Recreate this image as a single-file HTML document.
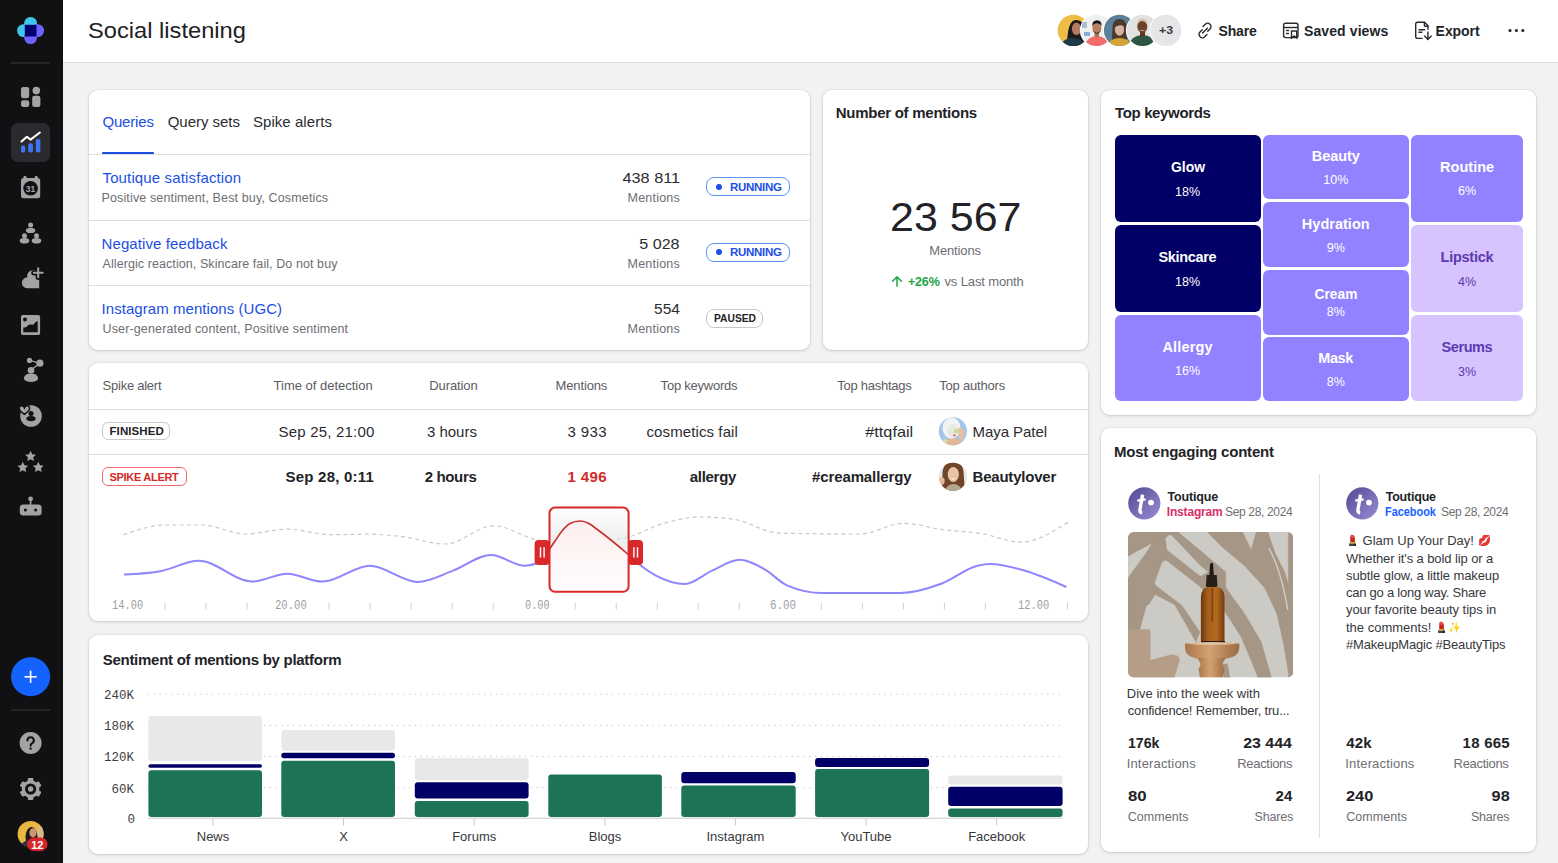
<!DOCTYPE html>
<html><head><meta charset="utf-8"><title>Social listening</title>
<style>
html,body{margin:0;padding:0;width:1558px;height:863px;overflow:hidden;background:#f2f2f4;font-family:'Liberation Sans', sans-serif}
.t{position:absolute;white-space:nowrap;line-height:1;}
.card{position:absolute;background:#fff;border-radius:9px;box-shadow:0 0 0 1px rgba(0,0,0,0.03),0 1px 3.5px rgba(0,0,0,0.15)}
.badge{position:absolute;box-sizing:border-box;border:1px solid;border-radius:8px;background:#fff}
</style></head><body>

<div style="position:absolute;left:0;top:0;width:63px;height:863px;background:#111113"></div>
<svg style="position:absolute;left:0;top:0" width="63" height="863" viewBox="0 0 63 863">
 <!-- logo -->
 <g>
  <rect x="24.2" y="16.9" width="12.8" height="14" rx="6.4" fill="#3ec6ec"/>
  <rect x="17.1" y="24.2" width="14" height="12.8" rx="6.4" fill="#3ec6ec"/>
  <rect x="30.1" y="24.2" width="14" height="12.8" rx="6.4" fill="#6c63ff"/>
  <rect x="24.2" y="30.1" width="12.8" height="14" rx="6.4" fill="#6c63ff"/>
  <rect x="24.8" y="24.8" width="11.7" height="11.7" fill="#00006e"/>
 </g>
 <line x1="11" y1="63" x2="50" y2="63" stroke="#3a3a3e" stroke-width="1"/>
 <!-- dashboard -->
 <g fill="#a3a3a6">
  <rect x="21" y="87" width="8.2" height="11.3" rx="2.2"/>
  <rect x="21" y="100.2" width="8.2" height="6.8" rx="2.2"/>
  <circle cx="36.3" cy="90.6" r="3.8"/>
  <rect x="32.2" y="95.8" width="8.2" height="11.2" rx="2.2"/>
 </g>
 <!-- active -->
 <rect x="11" y="123" width="39" height="39" rx="7" fill="#2b2b2f"/>
 <g fill="#3f74f5">
  <rect x="21" y="145.5" width="4.2" height="7" rx="1.6"/>
  <rect x="28.2" y="143.2" width="4.8" height="9.3" rx="2"/>
  <rect x="35.8" y="139" width="4.6" height="13.5" rx="2"/>
 </g>
 <polyline points="21.5,141.6 26.9,136.7 30.6,139.6 39.9,132.5" fill="none" stroke="#fff" stroke-width="2" stroke-linecap="round" stroke-linejoin="round"/>
 <!-- calendar -->
 <g>
  <rect x="21" y="178" width="19.2" height="20.3" rx="2.5" fill="#a3a3a6"/>
  <rect x="23.5" y="176" width="3" height="4" rx="1" fill="#a3a3a6"/>
  <rect x="34.7" y="176" width="3" height="4" rx="1" fill="#a3a3a6"/>
  <circle cx="30.6" cy="188.3" r="7.3" fill="#111113"/>
  <text x="30.6" y="191.6" font-family="Liberation Sans" font-weight="700" font-size="8.5" fill="#a3a3a6" text-anchor="middle">31</text>
 </g>
 <!-- people -->
 <g fill="#a3a3a6">
  <circle cx="30.6" cy="225" r="2.5"/>
  <ellipse cx="30.6" cy="230.4" rx="4.7" ry="2.7"/>
  <circle cx="24.5" cy="235.7" r="2.5"/>
  <ellipse cx="24.5" cy="240.8" rx="4.8" ry="2.8"/>
  <circle cx="36.5" cy="235.7" r="2.5"/>
  <ellipse cx="36.5" cy="240.8" rx="4.8" ry="2.8"/>
 </g>
 <!-- cloud plus -->
 <g>
  <path d="M27 288.2 A5.3 5.3 0 0 1 27.3 277.6 A5.6 5.6 0 0 1 38.3 274.5 L39.2 278 V288.2 Z" fill="#a3a3a6"/>
  <path d="M38.2 268.3 V277.3 M33.8 272.8 H42.7" stroke="#111113" stroke-width="5.2" stroke-linecap="round"/>
  <path d="M38.2 268.3 V277.3 M33.8 272.8 H42.7" stroke="#a3a3a6" stroke-width="2" stroke-linecap="round"/>
 </g>
 <!-- image -->
 <g>
  <rect x="21" y="315" width="19.1" height="20" rx="1.8" fill="#a3a3a6"/>
  <circle cx="25" cy="319.4" r="2" fill="#111113"/>
  <path d="M23.3 332.2 V327.4 Q25.5 328 27.5 326 Q28.5 324.2 30 324.4 L33.5 324.8 Q35 321.5 37.7 321 V332.2 Z" fill="#111113"/>
 </g>
 <!-- network person -->
 <g fill="#a3a3a6">
  <line x1="29.5" y1="360.4" x2="39.9" y2="363.2" stroke="#a3a3a6" stroke-width="1.3"/>
  <line x1="39.9" y1="363.2" x2="31" y2="370" stroke="#a3a3a6" stroke-width="1.3"/>
  <circle cx="29.5" cy="360.4" r="2.6"/>
  <circle cx="39.9" cy="363.2" r="3.6"/>
  <circle cx="31" cy="370.2" r="3.3"/>
  <path d="M23.8 379 q0 -5.6 7.2 -5.6 q7.2 0 7.2 5.6 q-2 2.9 -7.2 2.9 q-5.2 0 -7.2 -2.9z"/>
 </g>
 <!-- heart circle -->
 <g>
  <circle cx="31" cy="416" r="10.8" fill="#a3a3a6"/>
  <circle cx="31" cy="413.6" r="2.5" fill="#111113"/>
  <ellipse cx="31" cy="418.6" rx="4.6" ry="2.7" fill="#111113"/>
  <path d="M24.4 407.8 C23.4 405.0 19.2 405.0 19.2 408.40000000000003 C19.2 410.8 22.4 412.6 24.4 414.40000000000003 C26.4 412.6 29.599999999999998 410.8 29.599999999999998 408.40000000000003 C29.599999999999998 405.0 25.4 405.0 24.4 407.8 Z" fill="#a3a3a6" stroke="#111113" stroke-width="1.4"/>
 </g>
 <!-- stars -->
 <g fill="#a3a3a6">
  <path d="M30.6 450.8 l1.65 3.4 3.7 .5 -2.7 2.6 .65 3.7 -3.3 -1.75 -3.3 1.75 .65 -3.7 -2.7 -2.6 3.7 -.5z"/>
  <path d="M22.8 461.8 l1.65 3.4 3.7 .5 -2.7 2.6 .65 3.7 -3.3 -1.75 -3.3 1.75 .65 -3.7 -2.7 -2.6 3.7 -.5z"/>
  <path d="M38.3 461.8 l1.65 3.4 3.7 .5 -2.7 2.6 .65 3.7 -3.3 -1.75 -3.3 1.75 .65 -3.7 -2.7 -2.6 3.7 -.5z"/>
 </g>
 <!-- robot -->
 <g fill="#a3a3a6">
  <circle cx="30.6" cy="498.8" r="2.4"/>
  <rect x="29.8" y="499" width="1.6" height="6" />
  <rect x="19.8" y="504.6" width="21.8" height="11" rx="3.5"/>
  <circle cx="25.4" cy="510" r="1.5" fill="#111113"/>
  <circle cx="35.6" cy="510" r="1.5" fill="#111113"/>
 </g>
 <!-- plus button -->
 <circle cx="30.6" cy="676.8" r="19.5" fill="#1463ff"/>
 <rect x="24.5" y="676" width="12.2" height="1.6" fill="#fff"/>
 <rect x="29.8" y="670.7" width="1.6" height="12.2" fill="#fff"/>
 <line x1="11" y1="710" x2="50" y2="710" stroke="#3a3a3e" stroke-width="1"/>
 <!-- help -->
 <circle cx="30.6" cy="743" r="11" fill="#a3a3a6"/>
 <path d="M27.4 740.5 a3.2 3.2 0 1 1 4.6 2.9 q-1.4 .8 -1.4 2.3" fill="none" stroke="#111113" stroke-width="2" stroke-linecap="round"/>
 <circle cx="30.6" cy="748.6" r="1.2" fill="#111113"/>
 <!-- gear -->
 <g transform="translate(30.6 789)">
  <g fill="#a3a3a6">
   <rect x="-2.8" y="-11" width="5.6" height="22" rx="1"/>
   <rect x="-2.8" y="-11" width="5.6" height="22" rx="1" transform="rotate(60)"/>
   <rect x="-2.8" y="-11" width="5.6" height="22" rx="1" transform="rotate(120)"/>
   <circle r="8.8"/>
  </g>
  <circle r="5.6" fill="#111113"/>
  <circle r="2.7" fill="#a3a3a6"/>
 </g>
 <!-- avatar -->
 <defs><clipPath id="sav"><circle cx="30.6" cy="834" r="13"/></clipPath></defs>
 <g clip-path="url(#sav)">
  <rect x="17" y="820" width="28" height="28" fill="#e9b842"/>
  <ellipse cx="41.5" cy="833" rx="4.2" ry="6.5" fill="#d8b88e"/>
  <ellipse cx="31.5" cy="837" rx="6" ry="10" fill="#22191a"/>
  <ellipse cx="33" cy="832.8" rx="3.6" ry="4.6" fill="#c99576"/>
  <path d="M19 848 q4 -8 11 -8 q5 0 8 3 v5 z" fill="#24333f"/>
 </g>
 <rect x="27" y="837.5" width="20.5" height="13.5" rx="6.75" fill="#d8232a"/>
 <text x="37.3" y="848.6" font-family="Liberation Sans" font-weight="700" font-size="11" fill="#fff" text-anchor="middle">12</text>
</svg>

<div style="position:absolute;left:63px;top:0;width:1495px;height:62px;background:#fff;border-bottom:1px solid #dcdcdf"></div>
<svg style="position:absolute;left:1050px;top:8px" width="140" height="46" viewBox="1050 8 140 46">
<defs>
<clipPath id="ha1"><circle cx="1073.3" cy="30.4" r="15.6"/></clipPath>
<clipPath id="ha2"><circle cx="1096.5" cy="30.4" r="15.6"/></clipPath>
<clipPath id="ha3"><circle cx="1119.5" cy="30.4" r="15.6"/></clipPath>
<clipPath id="ha4"><circle cx="1142.5" cy="30.4" r="15.6"/></clipPath>
</defs>
<g clip-path="url(#ha1)">
 <rect x="1056" y="13" width="36" height="36" fill="#efbd47"/>
 <path d="M1066 50 L1068 32 Q1070 19 1077 20 Q1085 21 1084 32 L1086 50 Z" fill="#1f1a1c"/>
 <path d="M1058 50 Q1062 38 1072 38 Q1084 38 1090 50 Z" fill="#1f3a48"/>
 <ellipse cx="1076.5" cy="28.8" rx="4.6" ry="6.2" fill="#b57a62"/>
 <path d="M1072 24 Q1077 20 1081 25 L1080 22 Q1076 19 1072 22Z" fill="#1f1a1c"/>
</g>
<circle cx="1096.5" cy="30.4" r="16.6" fill="#fff"/>
<g clip-path="url(#ha2)">
 <rect x="1080" y="13" width="36" height="36" fill="#eef1ef"/>
 <rect x="1082" y="22" width="5" height="6" fill="#8fa6c8" opacity="0.7"/>
 <rect x="1084" y="32" width="6" height="4" fill="#4b7bd0" opacity="0.6"/>
 <path d="M1083 50 Q1086 36 1097 36 Q1108 36 1111 50 Z" fill="#f06d6b"/>
 <rect x="1094.5" y="31" width="4.5" height="6" fill="#a87458"/>
 <ellipse cx="1096.8" cy="27.8" rx="4.5" ry="5.8" fill="#b98062"/>
 <path d="M1092.3 26 Q1092 20.5 1097 20.3 Q1102 20.5 1101.5 26 Q1100 23 1097 23.3 Q1094 23 1092.3 26Z" fill="#1a1514"/>
 <path d="M1093 30 Q1097 36 1100.7 30 Q1100 33.5 1097 34 Q1094 33.5 1093 30Z" fill="#3a2a24"/>
</g>
<circle cx="1119.5" cy="30.4" r="16.6" fill="#fff"/>
<g clip-path="url(#ha3)">
 <rect x="1103" y="13" width="36" height="36" fill="#5b8098"/>
 <path d="M1112 40 L1112.5 27 Q1113 19 1119.5 19 Q1126 19 1126.5 27 L1127 40 Z" fill="#4a3a30"/>
 <path d="M1105 50 Q1108 38 1119.5 38 Q1131 38 1134 50 Z" fill="#d6a437"/>
 <ellipse cx="1119.5" cy="29.5" rx="4.6" ry="6.2" fill="#d9b39e"/>
 <path d="M1114.5 27 Q1115 21 1120 21.5 Q1125 22 1124.8 27 Q1122 23.5 1114.5 27Z" fill="#4a3a30"/>
</g>
<circle cx="1142.5" cy="30.4" r="16.6" fill="#fff"/>
<g clip-path="url(#ha4)">
 <rect x="1126" y="13" width="36" height="36" fill="#e2e1df"/>
 <path d="M1127 50 Q1130 35 1142.5 35 Q1155 35 1158 50 Z" fill="#2e5541"/>
 <rect x="1140" y="30" width="5" height="6" fill="#5e3422"/>
 <ellipse cx="1142.3" cy="26.5" rx="5" ry="6.2" fill="#6e3f2a"/>
 <path d="M1137.3 24.5 Q1137.5 18.5 1142.3 18.5 Q1147 18.5 1147.3 24.5 Q1145 21 1142.3 21 Q1139.5 21 1137.3 24.5Z" fill="#d7c09c"/>
 <path d="M1139.5 29.5 Q1142.3 32 1145 29.5 Q1142.3 30.8 1139.5 29.5Z" fill="#fff"/>
</g>
<circle cx="1165.8" cy="30.4" r="16.6" fill="#fff"/>
<circle cx="1165.8" cy="30.4" r="15.6" fill="#e6e6e8"/>
</svg>
<svg style="position:absolute;left:0;top:0" width="1558" height="62">
 <g fill="none" stroke="#2a2a2e" stroke-width="1.4" stroke-linecap="round">
  <path d="M1203 26.6 l2.3 -2.3 a3.3 3.3 0 0 1 4.7 4.7 l-2.3 2.3"/>
  <path d="M1207 34.4 l-2.3 2.3 a3.3 3.3 0 0 1 -4.7 -4.7 l2.3 -2.3"/>
  <line x1="1202.6" y1="33" x2="1207.4" y2="28.2"/>
 </g>
 <g fill="none" stroke="#2a2a2e" stroke-width="1.4">
  <rect x="1283.6" y="23.3" width="14.4" height="14.3" rx="2"/>
  <line x1="1283.6" y1="27.5" x2="1298" y2="27.5"/>
  <line x1="1286" y1="30.5" x2="1289" y2="30.5"/>
  <line x1="1286" y1="33.5" x2="1289" y2="33.5"/>
  <path d="M1291.5 31 h5.2 v7 l-2.6 -2 l-2.6 2 z" fill="#fff"/>
 </g>
 <g fill="none" stroke="#2a2a2e" stroke-width="1.4" stroke-linejoin="round" stroke-linecap="round">
  <path d="M1422 38.4 H1417.7 a2 2 0 0 1 -2 -2 V24.3 a2 2 0 0 1 2 -2 H1424.6 L1428 25.7 V29.3"/>
  <path d="M1424.4 22.5 V25.4 a0.9 0.9 0 0 0 0.9 0.9 H1428"/>
  <path d="M1419 29.8 H1424.6 M1419 32.3 H1421.8"/>
  <path d="M1427.9 32 V39.3 M1424.6 36.1 L1427.9 39.4 L1431.2 36.1"/>
 </g>
 <g fill="#2a2a2e"><circle cx="1510" cy="30.5" r="1.6"/><circle cx="1516.4" cy="30.5" r="1.6"/><circle cx="1522.8" cy="30.5" r="1.6"/></g>
</svg>
<div style="position:absolute;left:63px;top:63px;width:1495px;height:800px;background:#f2f2f4"></div>
<div class="card" style="left:89px;top:89.5px;width:721px;height:260.5px"></div>
<div class="card" style="left:823px;top:89.5px;width:265px;height:260.5px"></div>
<div class="card" style="left:1101px;top:89.5px;width:435px;height:325.7px"></div>
<div class="card" style="left:89px;top:362.5px;width:999px;height:258.5px"></div>
<div class="card" style="left:89px;top:635px;width:999px;height:219px"></div>
<div class="card" style="left:1101px;top:428px;width:435px;height:424px"></div>
<div style="position:absolute;left:102px;top:152px;width:52px;height:3px;background:#1b4fe4;border-radius:1px"></div>
<div style="position:absolute;left:89px;top:154px;width:721px;height:1px;background:#dedee2"></div>
<div style="position:absolute;left:89px;top:219.5px;width:721px;height:1px;background:#dedee2"></div>
<div style="position:absolute;left:89px;top:284.8px;width:721px;height:1px;background:#dedee2"></div>
<div class="badge" style="left:706px;top:177.4px;width:84px;height:19px;border-color:#5a93f4"></div>
<div style="position:absolute;left:716px;top:183.9px;width:6.4px;height:6.4px;border-radius:50%;background:#1b4fe4"></div>
<div class="badge" style="left:706px;top:242.60000000000002px;width:84px;height:19px;border-color:#5a93f4"></div>
<div style="position:absolute;left:716px;top:249.10000000000002px;width:6.4px;height:6.4px;border-radius:50%;background:#1b4fe4"></div>
<div class="badge" style="left:706px;top:308.5px;width:57px;height:19px;border-color:#c9c9cd"></div>
<svg style="position:absolute;left:890px;top:272px" width="14" height="16"><path d="M7 14.3 V5 M2.6 9.3 L7 4.9 L11.4 9.3" fill="none" stroke="#22a447" stroke-width="1.5" stroke-linecap="round" stroke-linejoin="round"/></svg>
<div style="position:absolute;left:1114.5px;top:134.8px;width:146.0px;height:87.4px;background:#000066;border-radius:6px"></div>
<div style="position:absolute;left:1114.5px;top:224.9px;width:146.0px;height:87.1px;background:#000066;border-radius:6px"></div>
<div style="position:absolute;left:1114.5px;top:314.8px;width:146.0px;height:86.7px;background:#9282ff;border-radius:6px"></div>
<div style="position:absolute;left:1262.6px;top:134.8px;width:146.3px;height:64.7px;background:#9282ff;border-radius:6px"></div>
<div style="position:absolute;left:1262.6px;top:202.4px;width:146.3px;height:64.6px;background:#9282ff;border-radius:6px"></div>
<div style="position:absolute;left:1262.6px;top:269.6px;width:146.3px;height:65.0px;background:#9282ff;border-radius:6px"></div>
<div style="position:absolute;left:1262.6px;top:337.2px;width:146.3px;height:64.3px;background:#9282ff;border-radius:6px"></div>
<div style="position:absolute;left:1411.4px;top:134.8px;width:111.4px;height:87.4px;background:#9282ff;border-radius:6px"></div>
<div style="position:absolute;left:1411.4px;top:224.9px;width:111.4px;height:87.1px;background:#d7c3fd;border-radius:6px"></div>
<div style="position:absolute;left:1411.4px;top:314.8px;width:111.4px;height:86.7px;background:#d7c3fd;border-radius:6px"></div>
<div style="position:absolute;left:89px;top:408.5px;width:999px;height:1px;background:#dedee2"></div>
<div style="position:absolute;left:89px;top:454px;width:999px;height:1px;background:#dedee2"></div>
<div class="badge" style="left:102.4px;top:422.3px;width:68px;height:18px;border-color:#c9c9cd;border-radius:6px"></div>
<div class="badge" style="left:102.4px;top:467.2px;width:84.5px;height:19px;border-color:#ef6b6b;border-radius:6px"></div>
<svg style="position:absolute;left:930px;top:410px" width="45" height="90" viewBox="930 410 45 90">
<defs><clipPath id="av1"><circle cx="952.9" cy="431.3" r="14.1"/></clipPath><clipPath id="av2"><circle cx="952.9" cy="476.8" r="14.1"/></clipPath></defs>
<g clip-path="url(#av1)">
 <rect x="936" y="415" width="34" height="34" fill="#a3c6ea"/>
 <path d="M939 447 Q944 438 953 438 Q962 438 966 447 Z" fill="#e2b79a"/>
 <ellipse cx="951.5" cy="428" rx="9" ry="10.5" fill="#f3f3f5"/>
 <ellipse cx="953" cy="431" rx="5.5" ry="7" fill="#e9e7e2"/>
 <circle cx="956" cy="431" r="2.2" fill="#bfe08e"/>
 <ellipse cx="954.4" cy="435.3" rx="1.4" ry="0.9" fill="#e0504a"/>
 <path d="M958 428 Q963 427 964.5 433 L962 441 Q958 438 958.5 433Z" fill="#e9bd9f"/>
 <circle cx="945" cy="441" r="2" fill="#cfe5b0"/>
</g>
<g clip-path="url(#av2)">
 <rect x="936" y="460" width="34" height="34" fill="#e6e5e3"/>
 <path d="M942 492 L942.5 472 Q944 461 953.5 461.5 Q963 462 963.5 472 L965 492 Z" fill="#6f4429"/>
 <path d="M944 494 Q946 484 953.5 484 Q961 484 963 494 Z" fill="#b5a693"/>
 <ellipse cx="953.3" cy="474.5" rx="5.6" ry="7.4" fill="#eac2a6"/>
 <path d="M950.5 478 Q953.3 481 956.2 478 Q953.3 479.2 950.5 478Z" fill="#fff"/>
 <ellipse cx="941.5" cy="481" rx="3.2" ry="3.8" fill="#e7b999"/>
</g>
</svg>
<svg style="position:absolute;left:0;top:0" width="1558" height="863" viewBox="0 0 1558 863">
<defs><clipPath id="boxclip"><rect x="549.5" y="507.6" width="79.1" height="84.1" rx="5"/></clipPath><linearGradient id="boxg" x1="0" y1="0" x2="0" y2="1"><stop offset="0" stop-color="#000" stop-opacity="0.005"/><stop offset="0.45" stop-color="#000" stop-opacity="0.07"/><stop offset="1" stop-color="#000" stop-opacity="0.0"/></linearGradient><linearGradient id="pinkg" x1="0" y1="0" x2="0" y2="1"><stop offset="0" stop-color="#fdeeee"/><stop offset="1" stop-color="#fff"/></linearGradient><clipPath id="outclip"><rect x="0" y="0" width="549" height="863"/><rect x="629" y="0" width="600" height="863"/></clipPath></defs>
<path d="M123.3 534.7 C137.5 529.9 151.8 525.0 166.0 525.0 C177.8 525.0 189.7 525.0 201.5 525.0 C216.3 525.0 231.0 534.0 245.8 534.0 C259.5 534.0 273.3 529.2 287.0 529.2 C301.8 529.2 316.6 534.7 331.4 534.7 C344.2 534.7 357.1 534.2 369.9 534.2 C381.2 534.2 392.5 535.5 403.8 536.9 C417.6 538.6 431.3 544.0 445.1 544.0 C461.4 544.0 477.6 525.8 493.9 525.8 C508.2 525.8 522.4 537.0 536.7 539.9 C544.5 541.5 552.2 543.0 560.0 543.0 C573.3 543.0 586.7 542.3 600.0 541.0 C609.9 540.0 619.7 539.2 629.6 536.6 C640.7 533.7 651.8 526.8 662.9 523.6 C675.7 519.9 688.4 517.0 701.2 517.0 C712.0 517.0 722.9 517.7 733.7 519.2 C749.0 521.3 764.2 532.9 779.5 533.2 C806.6 533.7 833.6 534.0 860.7 534.0 C875.0 534.0 889.2 523.3 903.5 523.3 C916.3 523.3 929.1 527.8 941.9 529.5 C955.5 531.3 969.2 531.6 982.8 533.9 C995.4 536.0 1007.9 542.2 1020.5 542.2 C1036.3 542.2 1052.1 532.2 1067.9 522.3" fill="none" stroke="#c9c9cc" stroke-width="1.2" stroke-dasharray="4 3.2"/>
<path d="M124.0 574.5 C136.6 573.9 149.1 573.2 161.7 570.9 C174.0 568.6 186.3 560.8 198.6 560.8 C216.6 560.8 234.5 581.5 252.5 581.5 C264.0 581.5 275.6 573.8 287.1 573.8 C298.9 573.8 310.8 581.6 322.6 581.6 C338.4 581.6 354.1 565.7 369.9 565.7 C385.9 565.7 401.8 581.9 417.8 581.9 C429.4 581.9 440.9 575.1 452.5 570.9 C465.3 566.2 478.1 554.9 490.9 554.9 C502.2 554.9 513.6 565.7 524.9 565.7 C528.6 565.7 532.3 565.0 536.0 563.5 C540.4 561.8 544.8 555.4 549.2 549.5 C551.5 546.5 553.7 542.8 556.0 539.5 C558.0 536.6 560.0 533.4 562.0 531.0 C564.7 527.8 567.3 524.8 570.0 523.5 C573.3 521.8 576.7 521.0 580.0 521.0 C583.0 521.0 586.0 521.9 589.0 523.5 C591.3 524.7 593.7 526.8 596.0 528.5 C606.7 536.3 617.5 545.2 628.2 554.5 C631.9 557.7 635.5 561.3 639.2 564.2 C644.6 568.6 650.1 572.4 655.5 575.3 C665.3 580.6 675.2 583.9 685.0 583.9 C693.9 583.9 702.7 574.8 711.6 570.9 C720.9 566.8 730.3 559.8 739.6 559.8 C748.0 559.8 756.4 564.7 764.8 569.4 C772.2 573.5 779.5 582.1 786.9 585.3 C798.7 590.4 810.5 593.0 822.3 593.0 C848.4 593.0 874.5 593.0 900.6 593.0 C914.4 593.0 928.1 588.6 941.9 583.5 C954.0 579.0 966.2 568.1 978.3 565.5 C982.3 564.6 986.4 564.0 990.4 564.0 C1001.9 564.0 1013.5 567.5 1025.0 570.8 C1038.8 574.7 1052.6 580.9 1066.4 587.0" fill="none" stroke="#8f86ff" stroke-width="2" clip-path="url(#outclip)"/>
<g clip-path="url(#boxclip)">
<rect x="548" y="506" width="82" height="88" fill="#fff" opacity="0.6"/>
<rect x="548" y="506" width="82" height="88" fill="url(#boxg)"/>
<path d="M124.0 574.5 C136.6 573.9 149.1 573.2 161.7 570.9 C174.0 568.6 186.3 560.8 198.6 560.8 C216.6 560.8 234.5 581.5 252.5 581.5 C264.0 581.5 275.6 573.8 287.1 573.8 C298.9 573.8 310.8 581.6 322.6 581.6 C338.4 581.6 354.1 565.7 369.9 565.7 C385.9 565.7 401.8 581.9 417.8 581.9 C429.4 581.9 440.9 575.1 452.5 570.9 C465.3 566.2 478.1 554.9 490.9 554.9 C502.2 554.9 513.6 565.7 524.9 565.7 C528.6 565.7 532.3 565.0 536.0 563.5 C540.4 561.8 544.8 555.4 549.2 549.5 C551.5 546.5 553.7 542.8 556.0 539.5 C558.0 536.6 560.0 533.4 562.0 531.0 C564.7 527.8 567.3 524.8 570.0 523.5 C573.3 521.8 576.7 521.0 580.0 521.0 C583.0 521.0 586.0 521.9 589.0 523.5 C591.3 524.7 593.7 526.8 596.0 528.5 C606.7 536.3 617.5 545.2 628.2 554.5 C631.9 557.7 635.5 561.3 639.2 564.2 C644.6 568.6 650.1 572.4 655.5 575.3 C665.3 580.6 675.2 583.9 685.0 583.9 C693.9 583.9 702.7 574.8 711.6 570.9 C720.9 566.8 730.3 559.8 739.6 559.8 C748.0 559.8 756.4 564.7 764.8 569.4 C772.2 573.5 779.5 582.1 786.9 585.3 C798.7 590.4 810.5 593.0 822.3 593.0 C848.4 593.0 874.5 593.0 900.6 593.0 C914.4 593.0 928.1 588.6 941.9 583.5 C954.0 579.0 966.2 568.1 978.3 565.5 C982.3 564.6 986.4 564.0 990.4 564.0 C1001.9 564.0 1013.5 567.5 1025.0 570.8 C1038.8 574.7 1052.6 580.9 1066.4 587.0 L1066 600 L124 600 Z" fill="url(#pinkg)"/>
<path d="M124.0 574.5 C136.6 573.9 149.1 573.2 161.7 570.9 C174.0 568.6 186.3 560.8 198.6 560.8 C216.6 560.8 234.5 581.5 252.5 581.5 C264.0 581.5 275.6 573.8 287.1 573.8 C298.9 573.8 310.8 581.6 322.6 581.6 C338.4 581.6 354.1 565.7 369.9 565.7 C385.9 565.7 401.8 581.9 417.8 581.9 C429.4 581.9 440.9 575.1 452.5 570.9 C465.3 566.2 478.1 554.9 490.9 554.9 C502.2 554.9 513.6 565.7 524.9 565.7 C528.6 565.7 532.3 565.0 536.0 563.5 C540.4 561.8 544.8 555.4 549.2 549.5 C551.5 546.5 553.7 542.8 556.0 539.5 C558.0 536.6 560.0 533.4 562.0 531.0 C564.7 527.8 567.3 524.8 570.0 523.5 C573.3 521.8 576.7 521.0 580.0 521.0 C583.0 521.0 586.0 521.9 589.0 523.5 C591.3 524.7 593.7 526.8 596.0 528.5 C606.7 536.3 617.5 545.2 628.2 554.5 C631.9 557.7 635.5 561.3 639.2 564.2 C644.6 568.6 650.1 572.4 655.5 575.3 C665.3 580.6 675.2 583.9 685.0 583.9 C693.9 583.9 702.7 574.8 711.6 570.9 C720.9 566.8 730.3 559.8 739.6 559.8 C748.0 559.8 756.4 564.7 764.8 569.4 C772.2 573.5 779.5 582.1 786.9 585.3 C798.7 590.4 810.5 593.0 822.3 593.0 C848.4 593.0 874.5 593.0 900.6 593.0 C914.4 593.0 928.1 588.6 941.9 583.5 C954.0 579.0 966.2 568.1 978.3 565.5 C982.3 564.6 986.4 564.0 990.4 564.0 C1001.9 564.0 1013.5 567.5 1025.0 570.8 C1038.8 574.7 1052.6 580.9 1066.4 587.0" fill="none" stroke="#c9302c" stroke-width="1.6"/>
</g>
<rect x="549.5" y="507.6" width="79.1" height="84.1" rx="5.5" fill="none" stroke="#d8282a" stroke-width="2"/>
<rect x="534.6" y="540" width="15" height="25" rx="4" fill="#d8282a"/>
<rect x="539.8000000000001" y="547.2" width="1.4" height="10.4" fill="#fff"/>
<rect x="543.4000000000001" y="547.2" width="1.4" height="10.4" fill="#fff"/>
<rect x="628.0" y="540" width="15" height="25" rx="4" fill="#d8282a"/>
<rect x="633.2" y="547.2" width="1.4" height="10.4" fill="#fff"/>
<rect x="636.8000000000001" y="547.2" width="1.4" height="10.4" fill="#fff"/>
<rect x="164.5" y="602.8" width="1" height="6.8" fill="#cfcfd3"/>
<rect x="205.5" y="602.8" width="1" height="6.8" fill="#cfcfd3"/>
<rect x="246.6" y="602.8" width="1" height="6.8" fill="#cfcfd3"/>
<rect x="328.6" y="602.8" width="1" height="6.8" fill="#cfcfd3"/>
<rect x="369.6" y="602.8" width="1" height="6.8" fill="#cfcfd3"/>
<rect x="410.6" y="602.8" width="1" height="6.8" fill="#cfcfd3"/>
<rect x="451.7" y="602.8" width="1" height="6.8" fill="#cfcfd3"/>
<rect x="492.7" y="602.8" width="1" height="6.8" fill="#cfcfd3"/>
<rect x="574.7" y="602.8" width="1" height="6.8" fill="#cfcfd3"/>
<rect x="615.7" y="602.8" width="1" height="6.8" fill="#cfcfd3"/>
<rect x="656.8" y="602.8" width="1" height="6.8" fill="#cfcfd3"/>
<rect x="697.8" y="602.8" width="1" height="6.8" fill="#cfcfd3"/>
<rect x="738.8" y="602.8" width="1" height="6.8" fill="#cfcfd3"/>
<rect x="820.8" y="602.8" width="1" height="6.8" fill="#cfcfd3"/>
<rect x="861.9" y="602.8" width="1" height="6.8" fill="#cfcfd3"/>
<rect x="902.9" y="602.8" width="1" height="6.8" fill="#cfcfd3"/>
<rect x="943.9" y="602.8" width="1" height="6.8" fill="#cfcfd3"/>
<rect x="984.9" y="602.8" width="1" height="6.8" fill="#cfcfd3"/>
<rect x="1067.0" y="602.8" width="1" height="6.8" fill="#cfcfd3"/>
</svg>
<svg style="position:absolute;left:0;top:0" width="1558" height="863" viewBox="0 0 1558 863">
<line x1="148" y1="694.1" x2="1062.6" y2="694.1" stroke="#c4c4c8" stroke-width="1" stroke-dasharray="1.2 4.6"/>
<line x1="148" y1="725.3" x2="1062.6" y2="725.3" stroke="#c4c4c8" stroke-width="1" stroke-dasharray="1.2 4.6"/>
<line x1="148" y1="756.5" x2="1062.6" y2="756.5" stroke="#c4c4c8" stroke-width="1" stroke-dasharray="1.2 4.6"/>
<line x1="148" y1="787.7" x2="1062.6" y2="787.7" stroke="#c4c4c8" stroke-width="1" stroke-dasharray="1.2 4.6"/>
<rect x="148.4" y="716.1" width="113.6" height="45.1" rx="3.0" fill="#e8e8ea"/>
<rect x="148.4" y="764.2" width="113.6" height="3.6" rx="1.8" fill="#000066"/>
<rect x="148.4" y="770.2" width="113.6" height="46.8" rx="3.0" fill="#1c7454"/>
<rect x="281.3" y="730.1" width="113.7" height="20.7" rx="3.0" fill="#e8e8ea"/>
<rect x="281.3" y="752.8" width="113.7" height="5.4" rx="2.7" fill="#000066"/>
<rect x="281.3" y="760.8" width="113.7" height="56.2" rx="3.0" fill="#1c7454"/>
<rect x="414.8" y="758.2" width="113.8" height="22.0" rx="3.0" fill="#e8e8ea"/>
<rect x="414.8" y="782.2" width="113.8" height="16.4" rx="3.0" fill="#000066"/>
<rect x="414.8" y="800.9" width="113.8" height="16.1" rx="3.0" fill="#1c7454"/>
<rect x="548.3" y="774.5" width="113.6" height="42.5" rx="3.0" fill="#1c7454"/>
<rect x="681.3" y="772.1" width="114.4" height="11.1" rx="3.0" fill="#000066"/>
<rect x="681.3" y="785.6" width="114.4" height="31.4" rx="3.0" fill="#1c7454"/>
<rect x="815.1" y="757.9" width="114.0" height="9.0" rx="3.0" fill="#000066"/>
<rect x="815.1" y="769" width="114.0" height="48.0" rx="3.0" fill="#1c7454"/>
<rect x="948.2" y="775.6" width="114.4" height="9.0" rx="3.0" fill="#e8e8ea"/>
<rect x="948.2" y="786.7" width="114.4" height="19.3" rx="3.0" fill="#000066"/>
<rect x="948.2" y="808.5" width="114.4" height="8.5" rx="3.0" fill="#1c7454"/>
<rect x="147.5" y="817.7" width="915.1" height="1" fill="#c8c8cc"/>
<rect x="212.5" y="818.7" width="1" height="6.8" fill="#c8c8cc"/>
<rect x="343.0" y="818.7" width="1" height="6.8" fill="#c8c8cc"/>
<rect x="473.7" y="818.7" width="1" height="6.8" fill="#c8c8cc"/>
<rect x="604.5" y="818.7" width="1" height="6.8" fill="#c8c8cc"/>
<rect x="734.9" y="818.7" width="1" height="6.8" fill="#c8c8cc"/>
<rect x="865.5" y="818.7" width="1" height="6.8" fill="#c8c8cc"/>
<rect x="996.2" y="818.7" width="1" height="6.8" fill="#c8c8cc"/>
</svg>
<div style="position:absolute;left:1319px;top:474px;width:1px;height:364px;background:#dedee2"></div>
<svg style="position:absolute;left:1127.5px;top:486.5px" width="33" height="33" viewBox="0 0 33 33">
<defs><linearGradient id="lg1127" x1="0" y1="0" x2="1" y2="1"><stop offset="0" stop-color="#4f4890"/><stop offset="1" stop-color="#9b8fd6"/></linearGradient></defs>
<circle cx="16.3" cy="16.3" r="16.1" fill="url(#lg1127)"/>
<path d="M14.6 7.6 L12 22.5 q-0.5 3 2.2 3.4" fill="none" stroke="#fff" stroke-width="3.4" stroke-linecap="butt"/>
<path d="M9.3 13.6 L17.6 12.4" fill="none" stroke="#fff" stroke-width="2.2"/>
<circle cx="23" cy="15.6" r="2.9" fill="#fff"/>
</svg>
<svg style="position:absolute;left:1346px;top:486.8px" width="33" height="33" viewBox="0 0 33 33">
<defs><linearGradient id="lg1346" x1="0" y1="0" x2="1" y2="1"><stop offset="0" stop-color="#4f4890"/><stop offset="1" stop-color="#9b8fd6"/></linearGradient></defs>
<circle cx="16.3" cy="16.3" r="16.1" fill="url(#lg1346)"/>
<path d="M14.6 7.6 L12 22.5 q-0.5 3 2.2 3.4" fill="none" stroke="#fff" stroke-width="3.4" stroke-linecap="butt"/>
<path d="M9.3 13.6 L17.6 12.4" fill="none" stroke="#fff" stroke-width="2.2"/>
<circle cx="23" cy="15.6" r="2.9" fill="#fff"/>
</svg>
<svg style="position:absolute;left:1127.6px;top:532.1px" width="165.3" height="145.5" viewBox="0 0 165.3 145.5">
<defs><clipPath id="phc"><rect width="165.3" height="145.5" rx="6"/></clipPath><linearGradient id="amb" x1="0" y1="0" x2="1" y2="0"><stop offset="0" stop-color="#6a360e"/><stop offset="0.3" stop-color="#a85f1c"/><stop offset="0.65" stop-color="#b46a1e"/><stop offset="1" stop-color="#743c10"/></linearGradient><linearGradient id="ped" x1="0" y1="0" x2="1" y2="0"><stop offset="0" stop-color="#a8754a"/><stop offset="0.45" stop-color="#d3a273"/><stop offset="1" stop-color="#9a6a42"/></linearGradient></defs>
<g clip-path="url(#phc)">
<rect width="165.3" height="145.5" fill="#cbcac4"/>
<polygon points="0.0,0.0 50.2,0.0 72.4,18.6 97.8,40.0 97.8,81.2 72.4,55.0 38.0,28.0 34.0,30.0 26.5,50.7 28.2,54.0 53.5,72.9 72.0,100.0 68.0,110.0 46.8,72.9 27.3,62.5 20.5,72.9 18.6,72.9 12.2,96.3 0.0,141.0" fill="#a59685" stroke="#a59685" stroke-width="0.3" stroke-linejoin="round"/>
<polygon points="0.0,24.4 23.5,11.7 18.9,19.4 0.0,45.6" fill="#cbcac4" stroke="#cbcac4" stroke-width="0.3" stroke-linejoin="round"/>
<polygon points="37.5,6.7 40.5,3.6 43.4,3.3 72.4,33.8 80.0,40.0 72.4,44.0 39.2,18.1" fill="#cbcac4" stroke="#cbcac4" stroke-width="0.3" stroke-linejoin="round"/>
<polygon points="79.2,0.0 114.7,0.0 123.1,17.8 128.2,0.0 140.0,0.0 146.8,20.3 156.9,40.6 161.2,55.8 160.3,140.3 155.2,109.9 148.5,81.2 136.6,55.8 116.4,33.8 94.4,15.2" fill="#a59685" stroke="#a59685" stroke-width="0.3" stroke-linejoin="round"/>
<polygon points="160.3,0.0 165.3,0.0 165.3,145.5 160.3,145.5" fill="#a59685" stroke="#a59685" stroke-width="0.3" stroke-linejoin="round"/>
<path d="M140.9 16.1 Q153 38 159.8 77.8" stroke="#cbcac4" stroke-width="1.5" fill="none"/>
<polygon points="97.8,55.8 116.4,81.2 133.3,109.9 143.4,145.5 129.9,145.5 123.1,128.5 113.0,104.8 97.8,81.2" fill="#a59685" stroke="#a59685" stroke-width="0.3" stroke-linejoin="round"/>
<polygon points="94.4,131.9 99.4,131.9 102.0,145.5 96.0,145.5" fill="#a59685" stroke="#a59685" stroke-width="0.3" stroke-linejoin="round"/>
<polygon points="0.0,97.4 21.0,97.4 22.3,99.0 22.3,128.3 44.0,122.5 50.0,124.0 51.6,128.3 46.3,145.5 0.0,145.5" fill="#b59d87" stroke="#b59d87" stroke-width="0.3" stroke-linejoin="round"/>
<path d="M82.2 31.5 q1.4 -1.2 2.8 0 l0.8 11.5 h-4.4z" fill="#1c1816"/>
<path d="M78.6 43 h10.2 l0.6 10.5 q0 1.5 -1.5 1.5 h-8.4 q-1.5 0 -1.5 -1.5z" fill="#262019"/>
<path d="M72.9 65 q0 -8.5 7 -10 h9.6 q7 1.5 7 10 V110 q0 1.5 -1.5 1.5 H74.4 q-1.5 0 -1.5 -1.5 Z" fill="url(#amb)"/>
<rect x="83.5" y="56" width="1.6" height="34" fill="#5a2e0c" opacity="0.6"/>
<rect x="73.5" y="109" width="23.5" height="2.5" fill="#2a160a"/>
<path d="M57 111.5 q27 -3 54.3 0 v4 q0 9 -12 11 h-30.3 q-12 -2 -12 -11z" fill="url(#ped)"/>
<path d="M69.5 126 h28.3 l-2.8 4.5 q-1.5 3 1.5 6 l-1.5 9 h-23 l-1.5 -9 q3 -3 1.5 -6z" fill="url(#ped)"/>
<path d="M57 111.5 q27 -3 54.3 0 q-27 3 -54.3 0z" fill="#dcc0a2"/>
</g></svg>
<div class="t" id="t0" data-tw="155.5" style="top:19.98px;font-size:22px;font-weight:400;color:#1f2024;font-family:'Liberation Sans', sans-serif;left:88.42px;transform:scaleX(1.0761);transform-origin:0 0;">Social listening</div>
<div class="t" id="t1" data-tw="13.7" style="top:25.27px;font-size:11.5px;font-weight:700;color:#3a3a3e;font-family:'Liberation Sans', sans-serif;left:1165.80px;transform:translateX(-50%) scaleX(1.0770);">+3</div>
<div class="t" id="t2" data-tw="38.5" style="top:24.25px;font-size:14px;font-weight:700;color:#232327;font-family:'Liberation Sans', sans-serif;letter-spacing:-0.156px;left:1218.50px;">Share</div>
<div class="t" id="t3" data-tw="84.5" style="top:24.25px;font-size:14px;font-weight:700;color:#232327;font-family:'Liberation Sans', sans-serif;letter-spacing:0.101px;left:1304.00px;">Saved views</div>
<div class="t" id="t4" data-tw="44.4" style="top:24.25px;font-size:14px;font-weight:700;color:#232327;font-family:'Liberation Sans', sans-serif;letter-spacing:-0.055px;left:1435.60px;">Export</div>
<div class="t" id="t5" data-tw="51.1" style="top:114.10px;font-size:15px;font-weight:400;color:#1b4fe4;font-family:'Liberation Sans', sans-serif;letter-spacing:-0.154px;left:102.40px;">Queries</div>
<div class="t" id="t6" data-tw="71.7" style="top:114.10px;font-size:15px;font-weight:400;color:#2c2c30;font-family:'Liberation Sans', sans-serif;letter-spacing:-0.036px;left:167.70px;">Query sets</div>
<div class="t" id="t7" data-tw="78.4" style="top:114.10px;font-size:15px;font-weight:400;color:#2c2c30;font-family:'Liberation Sans', sans-serif;letter-spacing:0.048px;left:253.00px;">Spike alerts</div>
<div class="t" id="t8" data-tw="138.3" style="top:170.30px;font-size:15px;font-weight:400;color:#1b4fe4;font-family:'Liberation Sans', sans-serif;letter-spacing:0.136px;left:102.50px;">Toutique satisfaction</div>
<div class="t" id="t9" data-tw="225.3" style="top:192.42px;font-size:12.5px;font-weight:400;color:#6e6e73;font-family:'Liberation Sans', sans-serif;letter-spacing:0.136px;left:101.50px;">Positive sentiment, Best buy, Cosmetics</div>
<div class="t" id="t10" data-tw="57.3" style="top:170.30px;font-size:15px;font-weight:400;color:#2c2c30;font-family:'Liberation Sans', sans-serif;right:878.13px;transform:scaleX(1.0858);transform-origin:100% 0;">438 811</div>
<div class="t" id="t11" data-tw="51" style="top:192.42px;font-size:12.5px;font-weight:400;color:#6e6e73;font-family:'Liberation Sans', sans-serif;letter-spacing:0.219px;right:878.03px;">Mentions</div>
<div class="t" id="t12" data-tw="52" style="top:181.57px;font-size:11.5px;font-weight:700;color:#1b4fe4;font-family:'Liberation Sans', sans-serif;letter-spacing:-0.287px;left:730.00px;">RUNNING</div>
<div class="t" id="t13" data-tw="125.4" style="top:235.50px;font-size:15px;font-weight:400;color:#1b4fe4;font-family:'Liberation Sans', sans-serif;letter-spacing:0.103px;left:101.50px;">Negative feedback</div>
<div class="t" id="t14" data-tw="235.7" style="top:257.62px;font-size:12.5px;font-weight:400;color:#6e6e73;font-family:'Liberation Sans', sans-serif;letter-spacing:0.083px;left:102.50px;">Allergic reaction, Skincare fail, Do not buy</div>
<div class="t" id="t15" data-tw="39.9" style="top:235.50px;font-size:15px;font-weight:400;color:#2c2c30;font-family:'Liberation Sans', sans-serif;right:878.13px;transform:scaleX(1.0729);transform-origin:100% 0;">5 028</div>
<div class="t" id="t16" data-tw="51" style="top:257.62px;font-size:12.5px;font-weight:400;color:#6e6e73;font-family:'Liberation Sans', sans-serif;letter-spacing:0.219px;right:878.03px;">Mentions</div>
<div class="t" id="t17" data-tw="52" style="top:246.77px;font-size:11.5px;font-weight:700;color:#1b4fe4;font-family:'Liberation Sans', sans-serif;letter-spacing:-0.287px;left:730.00px;">RUNNING</div>
<div class="t" id="t18" data-tw="179.6" style="top:300.70px;font-size:15px;font-weight:400;color:#1b4fe4;font-family:'Liberation Sans', sans-serif;letter-spacing:0.060px;left:101.50px;">Instagram mentions (UGC)</div>
<div class="t" id="t19" data-tw="246.1" style="top:322.82px;font-size:12.5px;font-weight:400;color:#6e6e73;font-family:'Liberation Sans', sans-serif;letter-spacing:0.143px;left:102.50px;">User-generated content, Positive sentiment</div>
<div class="t" id="t20" data-tw="25.6" style="top:300.70px;font-size:15px;font-weight:400;color:#2c2c30;font-family:'Liberation Sans', sans-serif;right:878.15px;transform:scaleX(1.0373);transform-origin:100% 0;">554</div>
<div class="t" id="t21" data-tw="51" style="top:322.82px;font-size:12.5px;font-weight:400;color:#6e6e73;font-family:'Liberation Sans', sans-serif;letter-spacing:0.219px;right:878.03px;">Mentions</div>
<div class="t" id="t22" data-tw="42" style="top:313.29px;font-size:11px;font-weight:700;color:#232327;font-family:'Liberation Sans', sans-serif;left:713.50px;transform:scaleX(0.9317);transform-origin:0 0;">PAUSED</div>
<div class="t" id="t23" data-tw="140.1" style="top:104.90px;font-size:15px;font-weight:700;color:#232327;font-family:'Liberation Sans', sans-serif;letter-spacing:-0.259px;left:835.70px;">Number of mentions</div>
<div class="t" id="t24" data-tw="128" style="top:196.54px;font-size:40px;font-weight:400;color:#232327;font-family:'Liberation Sans', sans-serif;left:890.05px;transform:scaleX(1.0747);transform-origin:0 0;">23 567</div>
<div class="t" id="t25" data-tw="51.3" style="top:244.30px;font-size:13px;font-weight:400;color:#6e6e73;font-family:'Liberation Sans', sans-serif;letter-spacing:-0.136px;left:929.20px;">Mentions</div>
<div class="t" id="t26" data-tw="31.8" style="top:275.62px;font-size:12.5px;font-weight:700;color:#22a447;font-family:'Liberation Sans', sans-serif;letter-spacing:-0.135px;left:907.90px;">+26%</div>
<div class="t" id="t27" data-tw="79.1" style="top:275.20px;font-size:13px;font-weight:400;color:#6e6e73;font-family:'Liberation Sans', sans-serif;letter-spacing:-0.133px;left:944.50px;">vs Last month</div>
<div class="t" id="t28" data-tw="95.5" style="top:104.70px;font-size:15px;font-weight:700;color:#232327;font-family:'Liberation Sans', sans-serif;letter-spacing:-0.354px;left:1115.00px;">Top keywords</div>
<div class="t" id="t29" data-tw="34.8" style="top:160.33px;font-size:14.5px;font-weight:700;color:#fff;font-family:'Liberation Sans', sans-serif;left:1187.50px;transform:translateX(-50%) scaleX(0.9624);">Glow</div>
<div class="t" id="t30" style="top:185.82px;font-size:12.5px;font-weight:400;color:#fff;font-family:'Liberation Sans', sans-serif;left:1187.50px;transform:translateX(-50%);">18%</div>
<div class="t" id="t31" data-tw="58" style="top:250.13px;font-size:14.5px;font-weight:700;color:#fff;font-family:'Liberation Sans', sans-serif;letter-spacing:-0.342px;left:1187.33px;transform:translateX(-50%);">Skincare</div>
<div class="t" id="t32" style="top:275.62px;font-size:12.5px;font-weight:400;color:#fff;font-family:'Liberation Sans', sans-serif;left:1187.50px;transform:translateX(-50%);">18%</div>
<div class="t" id="t33" data-tw="50" style="top:339.93px;font-size:14.5px;font-weight:700;color:#fff;font-family:'Liberation Sans', sans-serif;letter-spacing:0.151px;left:1187.58px;transform:translateX(-50%);">Allergy</div>
<div class="t" id="t34" style="top:365.42px;font-size:12.5px;font-weight:400;color:#fff;font-family:'Liberation Sans', sans-serif;left:1187.50px;transform:translateX(-50%);">16%</div>
<div class="t" id="t35" data-tw="48" style="top:148.93px;font-size:14.5px;font-weight:700;color:#fff;font-family:'Liberation Sans', sans-serif;letter-spacing:-0.057px;left:1335.72px;transform:translateX(-50%);">Beauty</div>
<div class="t" id="t36" style="top:174.22px;font-size:12.5px;font-weight:400;color:#fff;font-family:'Liberation Sans', sans-serif;left:1335.75px;transform:translateX(-50%);">10%</div>
<div class="t" id="t37" data-tw="67" style="top:216.53px;font-size:14.5px;font-weight:700;color:#fff;font-family:'Liberation Sans', sans-serif;letter-spacing:0.023px;left:1335.76px;transform:translateX(-50%);">Hydration</div>
<div class="t" id="t38" style="top:241.52px;font-size:12.5px;font-weight:400;color:#fff;font-family:'Liberation Sans', sans-serif;left:1335.75px;transform:translateX(-50%);">9%</div>
<div class="t" id="t39" data-tw="42" style="top:286.73px;font-size:14.5px;font-weight:700;color:#fff;font-family:'Liberation Sans', sans-serif;left:1335.75px;transform:translateX(-50%) scaleX(0.9494);">Cream</div>
<div class="t" id="t40" style="top:305.92px;font-size:12.5px;font-weight:400;color:#fff;font-family:'Liberation Sans', sans-serif;left:1335.75px;transform:translateX(-50%);">8%</div>
<div class="t" id="t41" data-tw="36" style="top:351.03px;font-size:14.5px;font-weight:700;color:#fff;font-family:'Liberation Sans', sans-serif;letter-spacing:-0.402px;left:1335.55px;transform:translateX(-50%);">Mask</div>
<div class="t" id="t42" style="top:376.32px;font-size:12.5px;font-weight:400;color:#fff;font-family:'Liberation Sans', sans-serif;left:1335.75px;transform:translateX(-50%);">8%</div>
<div class="t" id="t43" data-tw="54" style="top:160.13px;font-size:14.5px;font-weight:700;color:#fff;font-family:'Liberation Sans', sans-serif;letter-spacing:0.017px;left:1467.11px;transform:translateX(-50%);">Routine</div>
<div class="t" id="t44" style="top:185.42px;font-size:12.5px;font-weight:400;color:#fff;font-family:'Liberation Sans', sans-serif;left:1467.10px;transform:translateX(-50%);">6%</div>
<div class="t" id="t45" data-tw="54" style="top:250.03px;font-size:14.5px;font-weight:700;color:#5b3ab0;font-family:'Liberation Sans', sans-serif;letter-spacing:-0.247px;left:1466.98px;transform:translateX(-50%);">Lipstick</div>
<div class="t" id="t46" style="top:275.62px;font-size:12.5px;font-weight:400;color:#5b3ab0;font-family:'Liberation Sans', sans-serif;left:1467.10px;transform:translateX(-50%);">4%</div>
<div class="t" id="t47" data-tw="51" style="top:339.93px;font-size:14.5px;font-weight:700;color:#5b3ab0;font-family:'Liberation Sans', sans-serif;letter-spacing:-0.426px;left:1466.89px;transform:translateX(-50%);">Serums</div>
<div class="t" id="t48" style="top:365.52px;font-size:12.5px;font-weight:400;color:#5b3ab0;font-family:'Liberation Sans', sans-serif;left:1467.10px;transform:translateX(-50%);">3%</div>
<div class="t" id="t49" data-tw="59.3" style="top:379.30px;font-size:13px;font-weight:400;color:#5c5c61;font-family:'Liberation Sans', sans-serif;letter-spacing:-0.251px;left:102.60px;">Spike alert</div>
<div class="t" id="t50" data-tw="98.8" style="top:379.30px;font-size:13px;font-weight:400;color:#5c5c61;font-family:'Liberation Sans', sans-serif;letter-spacing:-0.013px;right:1185.38px;">Time of detection</div>
<div class="t" id="t51" data-tw="47.2" style="top:379.30px;font-size:13px;font-weight:400;color:#5c5c61;font-family:'Liberation Sans', sans-serif;letter-spacing:-0.101px;right:1080.37px;">Duration</div>
<div class="t" id="t52" data-tw="51.2" style="top:379.30px;font-size:13px;font-weight:400;color:#5c5c61;font-family:'Liberation Sans', sans-serif;letter-spacing:-0.150px;right:950.85px;">Mentions</div>
<div class="t" id="t53" data-tw="77.5" style="top:379.30px;font-size:13px;font-weight:400;color:#5c5c61;font-family:'Liberation Sans', sans-serif;letter-spacing:-0.225px;right:820.62px;">Top keywords</div>
<div class="t" id="t54" data-tw="75" style="top:379.30px;font-size:13px;font-weight:400;color:#5c5c61;font-family:'Liberation Sans', sans-serif;letter-spacing:-0.258px;right:646.56px;">Top hashtags</div>
<div class="t" id="t55" data-tw="66.5" style="top:379.30px;font-size:13px;font-weight:400;color:#5c5c61;font-family:'Liberation Sans', sans-serif;letter-spacing:-0.193px;left:939.20px;">Top authors</div>
<div class="t" id="t56" data-tw="54" style="top:426.27px;font-size:11.5px;font-weight:700;color:#232327;font-family:'Liberation Sans', sans-serif;letter-spacing:0.091px;left:109.50px;">FINISHED</div>
<div class="t" id="t57" data-tw="70" style="top:471.99px;font-size:11px;font-weight:700;color:#d42a2a;font-family:'Liberation Sans', sans-serif;letter-spacing:-0.301px;left:109.50px;">SPIKE ALERT</div>
<div class="t" id="t58" data-tw="95.4" style="top:423.90px;font-size:15px;font-weight:400;color:#2c2c30;font-family:'Liberation Sans', sans-serif;letter-spacing:0.194px;right:1183.46px;">Sep 25, 21:00</div>
<div class="t" id="t59" data-tw="49.4" style="top:423.90px;font-size:15px;font-weight:400;color:#2c2c30;font-family:'Liberation Sans', sans-serif;letter-spacing:-0.022px;right:1081.12px;">3 hours</div>
<div class="t" id="t60" data-tw="38.8" style="top:423.90px;font-size:15px;font-weight:400;color:#2c2c30;font-family:'Liberation Sans', sans-serif;letter-spacing:0.401px;right:951.06px;">3 933</div>
<div class="t" id="t61" data-tw="91" style="top:423.90px;font-size:15px;font-weight:400;color:#2c2c30;font-family:'Liberation Sans', sans-serif;letter-spacing:0.101px;right:820.07px;">cosmetics fail</div>
<div class="t" id="t62" data-tw="47.6" style="top:423.90px;font-size:15px;font-weight:400;color:#2c2c30;font-family:'Liberation Sans', sans-serif;right:645.04px;transform:scaleX(1.0853);transform-origin:100% 0;">#ttqfail</div>
<div class="t" id="t63" data-tw="73.2" style="top:423.90px;font-size:15px;font-weight:400;color:#2c2c30;font-family:'Liberation Sans', sans-serif;letter-spacing:-0.056px;left:972.50px;">Maya Patel</div>
<div class="t" id="t64" data-tw="87.8" style="top:469.10px;font-size:15px;font-weight:700;color:#232327;font-family:'Liberation Sans', sans-serif;letter-spacing:0.205px;right:1184.05px;">Sep 28, 0:11</div>
<div class="t" id="t65" data-tw="51.7" style="top:469.10px;font-size:15px;font-weight:700;color:#232327;font-family:'Liberation Sans', sans-serif;letter-spacing:-0.356px;right:1081.61px;">2 hours</div>
<div class="t" id="t66" data-tw="38.8" style="top:469.10px;font-size:15px;font-weight:700;color:#d42a2a;font-family:'Liberation Sans', sans-serif;letter-spacing:0.401px;right:951.06px;">1 496</div>
<div class="t" id="t67" data-tw="47.2" style="top:469.10px;font-size:15px;font-weight:700;color:#232327;font-family:'Liberation Sans', sans-serif;letter-spacing:-0.303px;right:821.96px;">allergy</div>
<div class="t" id="t68" data-tw="100.2" style="top:469.10px;font-size:15px;font-weight:700;color:#232327;font-family:'Liberation Sans', sans-serif;letter-spacing:-0.114px;right:646.57px;">#creamallergy</div>
<div class="t" id="t69" data-tw="83" style="top:469.10px;font-size:15px;font-weight:700;color:#232327;font-family:'Liberation Sans', sans-serif;letter-spacing:-0.203px;left:972.50px;">Beautylover</div>
<div class="t" id="t70" data-tw="30.7" style="top:600.42px;font-size:12.5px;font-weight:400;color:#9e9ea3;font-family:'Liberation Mono', monospace;left:111.70px;transform:scaleX(0.8297);transform-origin:0 0;">14.00</div>
<div class="t" id="t71" data-tw="31.4" style="top:600.42px;font-size:12.5px;font-weight:400;color:#9e9ea3;font-family:'Liberation Mono', monospace;left:274.60px;transform:scaleX(0.8486);transform-origin:0 0;">20.00</div>
<div class="t" id="t72" data-tw="24" style="top:600.42px;font-size:12.5px;font-weight:400;color:#9e9ea3;font-family:'Liberation Mono', monospace;left:524.60px;transform:scaleX(0.8200);transform-origin:0 0;">0.00</div>
<div class="t" id="t73" data-tw="25.5" style="top:600.42px;font-size:12.5px;font-weight:400;color:#9e9ea3;font-family:'Liberation Mono', monospace;left:770.00px;transform:scaleX(0.8644);transform-origin:0 0;">6.00</div>
<div class="t" id="t74" data-tw="30.9" style="top:600.42px;font-size:12.5px;font-weight:400;color:#9e9ea3;font-family:'Liberation Mono', monospace;left:1017.80px;transform:scaleX(0.8351);transform-origin:0 0;">12.00</div>
<div class="t" id="t75" data-tw="238.6" style="top:652.20px;font-size:15px;font-weight:700;color:#232327;font-family:'Liberation Sans', sans-serif;letter-spacing:-0.268px;left:102.70px;">Sentiment of mentions by platform</div>
<div class="t" id="t76" style="top:690.22px;font-size:12.5px;font-weight:400;color:#3e3e43;font-family:'Liberation Mono', monospace;right:1423.90px;">240K</div>
<div class="t" id="t77" style="top:721.42px;font-size:12.5px;font-weight:400;color:#3e3e43;font-family:'Liberation Mono', monospace;right:1423.90px;">180K</div>
<div class="t" id="t78" style="top:752.42px;font-size:12.5px;font-weight:400;color:#3e3e43;font-family:'Liberation Mono', monospace;right:1423.90px;">120K</div>
<div class="t" id="t79" style="top:783.62px;font-size:12.5px;font-weight:400;color:#3e3e43;font-family:'Liberation Mono', monospace;right:1423.90px;">60K</div>
<div class="t" id="t80" style="top:814.22px;font-size:12.5px;font-weight:400;color:#3e3e43;font-family:'Liberation Mono', monospace;right:1422.90px;">0</div>
<div class="t" id="t81" style="top:830.00px;font-size:13px;font-weight:400;color:#38383c;font-family:'Liberation Sans', sans-serif;left:213.00px;transform:translateX(-50%);">News</div>
<div class="t" id="t82" style="top:830.00px;font-size:13px;font-weight:400;color:#38383c;font-family:'Liberation Sans', sans-serif;left:343.50px;transform:translateX(-50%);">X</div>
<div class="t" id="t83" style="top:830.00px;font-size:13px;font-weight:400;color:#38383c;font-family:'Liberation Sans', sans-serif;left:474.20px;transform:translateX(-50%);">Forums</div>
<div class="t" id="t84" style="top:830.00px;font-size:13px;font-weight:400;color:#38383c;font-family:'Liberation Sans', sans-serif;left:605.00px;transform:translateX(-50%);">Blogs</div>
<div class="t" id="t85" style="top:830.00px;font-size:13px;font-weight:400;color:#38383c;font-family:'Liberation Sans', sans-serif;left:735.40px;transform:translateX(-50%);">Instagram</div>
<div class="t" id="t86" style="top:830.00px;font-size:13px;font-weight:400;color:#38383c;font-family:'Liberation Sans', sans-serif;left:866.00px;transform:translateX(-50%);">YouTube</div>
<div class="t" id="t87" style="top:830.00px;font-size:13px;font-weight:400;color:#38383c;font-family:'Liberation Sans', sans-serif;left:996.70px;transform:translateX(-50%);">Facebook</div>
<div class="t" id="t88" data-tw="159.1" style="top:443.70px;font-size:15px;font-weight:700;color:#232327;font-family:'Liberation Sans', sans-serif;letter-spacing:-0.203px;left:1113.90px;">Most engaging content</div>
<div class="t" id="t89" data-tw="50.8" style="top:490.62px;font-size:12.5px;font-weight:700;color:#232327;font-family:'Liberation Sans', sans-serif;letter-spacing:-0.155px;left:1167.40px;">Toutique</div>
<div class="t" id="t90" data-tw="55.2" style="top:505.54px;font-size:12px;font-weight:700;color:#d9306a;font-family:'Liberation Sans', sans-serif;letter-spacing:-0.185px;left:1166.80px;">Instagram</div>
<div class="t" id="t91" data-tw="68" style="top:505.54px;font-size:12px;font-weight:400;color:#6e6e73;font-family:'Liberation Sans', sans-serif;letter-spacing:-0.338px;left:1225.00px;">Sep 28, 2024</div>
<div class="t" id="t92" data-tw="50.4" style="top:490.62px;font-size:12.5px;font-weight:700;color:#232327;font-family:'Liberation Sans', sans-serif;letter-spacing:-0.212px;left:1385.70px;">Toutique</div>
<div class="t" id="t93" data-tw="51.2" style="top:505.54px;font-size:12px;font-weight:700;color:#1463ff;font-family:'Liberation Sans', sans-serif;left:1385.30px;transform:scaleX(0.9088);transform-origin:0 0;">Facebook</div>
<div class="t" id="t94" data-tw="68" style="top:505.54px;font-size:12px;font-weight:400;color:#6e6e73;font-family:'Liberation Sans', sans-serif;letter-spacing:-0.338px;left:1441.00px;">Sep 28, 2024</div>
<div class="t" id="t95" data-tw="131.9" style="top:687.00px;font-size:13px;font-weight:400;color:#38383c;font-family:'Liberation Sans', sans-serif;letter-spacing:0.008px;left:1126.80px;">Dive into the week with</div>
<div class="t" id="t96" data-tw="161.2" style="top:704.20px;font-size:13px;font-weight:400;color:#38383c;font-family:'Liberation Sans', sans-serif;letter-spacing:-0.189px;left:1127.80px;">confidence! Remember, tru...</div>
<div class="t" id="t97" data-tw="32" style="top:735.00px;font-size:15px;font-weight:700;color:#232327;font-family:'Liberation Sans', sans-serif;left:1127.70px;transform:scaleX(0.9403);transform-origin:0 0;">176k</div>
<div class="t" id="t98" data-tw="49.4" style="top:735.00px;font-size:15px;font-weight:700;color:#232327;font-family:'Liberation Sans', sans-serif;right:265.70px;transform:scaleX(1.0615);transform-origin:100% 0;">23 444</div>
<div class="t" id="t99" data-tw="68.5" style="top:757.30px;font-size:13px;font-weight:400;color:#6e6e73;font-family:'Liberation Sans', sans-serif;letter-spacing:0.163px;left:1126.70px;">Interactions</div>
<div class="t" id="t100" data-tw="54.7" style="top:757.30px;font-size:13px;font-weight:400;color:#6e6e73;font-family:'Liberation Sans', sans-serif;letter-spacing:-0.326px;right:265.83px;">Reactions</div>
<div class="t" id="t101" data-tw="18.3" style="top:788.00px;font-size:15px;font-weight:700;color:#232327;font-family:'Liberation Sans', sans-serif;left:1127.70px;transform:scaleX(1.1200);transform-origin:0 0;">80</div>
<div class="t" id="t102" data-tw="17.4" style="top:788.00px;font-size:15px;font-weight:700;color:#232327;font-family:'Liberation Sans', sans-serif;letter-spacing:0.058px;right:265.60px;">24</div>
<div class="t" id="t103" data-tw="60.5" style="top:810.62px;font-size:12.5px;font-weight:400;color:#6e6e73;font-family:'Liberation Sans', sans-serif;letter-spacing:0.046px;left:1127.70px;">Comments</div>
<div class="t" id="t104" data-tw="38.4" style="top:810.62px;font-size:12.5px;font-weight:400;color:#6e6e73;font-family:'Liberation Sans', sans-serif;letter-spacing:-0.191px;right:264.94px;">Shares</div>
<div class="t" id="t105" data-tw="26" style="top:735.00px;font-size:15px;font-weight:700;color:#232327;font-family:'Liberation Sans', sans-serif;letter-spacing:0.158px;left:1346.30px;">42k</div>
<div class="t" id="t106" data-tw="46.7" style="top:735.00px;font-size:15px;font-weight:700;color:#232327;font-family:'Liberation Sans', sans-serif;letter-spacing:0.233px;right:48.12px;">18 665</div>
<div class="t" id="t107" data-tw="68.5" style="top:757.30px;font-size:13px;font-weight:400;color:#6e6e73;font-family:'Liberation Sans', sans-serif;letter-spacing:0.163px;left:1345.30px;">Interactions</div>
<div class="t" id="t108" data-tw="54.7" style="top:757.30px;font-size:13px;font-weight:400;color:#6e6e73;font-family:'Liberation Sans', sans-serif;letter-spacing:-0.326px;right:49.53px;">Reactions</div>
<div class="t" id="t109" data-tw="26.9" style="top:788.00px;font-size:15px;font-weight:700;color:#232327;font-family:'Liberation Sans', sans-serif;left:1346.30px;transform:scaleX(1.0900);transform-origin:0 0;">240</div>
<div class="t" id="t110" data-tw="17.7" style="top:788.00px;font-size:15px;font-weight:700;color:#232327;font-family:'Liberation Sans', sans-serif;right:48.33px;transform:scaleX(1.0832);transform-origin:100% 0;">98</div>
<div class="t" id="t111" data-tw="60.5" style="top:810.62px;font-size:12.5px;font-weight:400;color:#6e6e73;font-family:'Liberation Sans', sans-serif;letter-spacing:0.046px;left:1346.30px;">Comments</div>
<div class="t" id="t112" data-tw="38.4" style="top:810.62px;font-size:12.5px;font-weight:400;color:#6e6e73;font-family:'Liberation Sans', sans-serif;letter-spacing:-0.191px;right:48.64px;">Shares</div>
<div class="t" id="t113" style="top:534.40px;font-size:13px;font-weight:400;color:#38383c;font-family:'Liberation Sans', sans-serif;left:1346.00px;"><span style="font-size:10.5px;vertical-align:1px">&#x1F484;</span> Glam Up Your Day! <span style="font-size:10.5px;vertical-align:1px">&#x1F48B;</span></div>
<div class="t" id="t114" data-tw="148" style="top:551.65px;font-size:13px;font-weight:400;color:#38383c;font-family:'Liberation Sans', sans-serif;letter-spacing:-0.098px;left:1346.00px;">Whether it's a bold lip or a</div>
<div class="t" id="t115" data-tw="153" style="top:568.90px;font-size:13px;font-weight:400;color:#38383c;font-family:'Liberation Sans', sans-serif;letter-spacing:-0.079px;left:1346.00px;">subtle glow, a little makeup</div>
<div class="t" id="t116" data-tw="140" style="top:586.15px;font-size:13px;font-weight:400;color:#38383c;font-family:'Liberation Sans', sans-serif;letter-spacing:-0.240px;left:1346.00px;">can go a long way. Share</div>
<div class="t" id="t117" data-tw="150" style="top:603.40px;font-size:13px;font-weight:400;color:#38383c;font-family:'Liberation Sans', sans-serif;letter-spacing:-0.056px;left:1346.00px;">your favorite beauty tips in</div>
<div class="t" id="t118" style="top:620.65px;font-size:13px;font-weight:400;color:#38383c;font-family:'Liberation Sans', sans-serif;left:1346.00px;">the comments! <span style="font-size:10.5px;vertical-align:1px">&#x1F484;&#x2728;</span></div>
<div class="t" id="t119" data-tw="160" style="top:637.90px;font-size:13px;font-weight:400;color:#38383c;font-family:'Liberation Sans', sans-serif;letter-spacing:-0.176px;left:1346.00px;">#MakeupMagic #BeautyTips</div>
</body></html>
